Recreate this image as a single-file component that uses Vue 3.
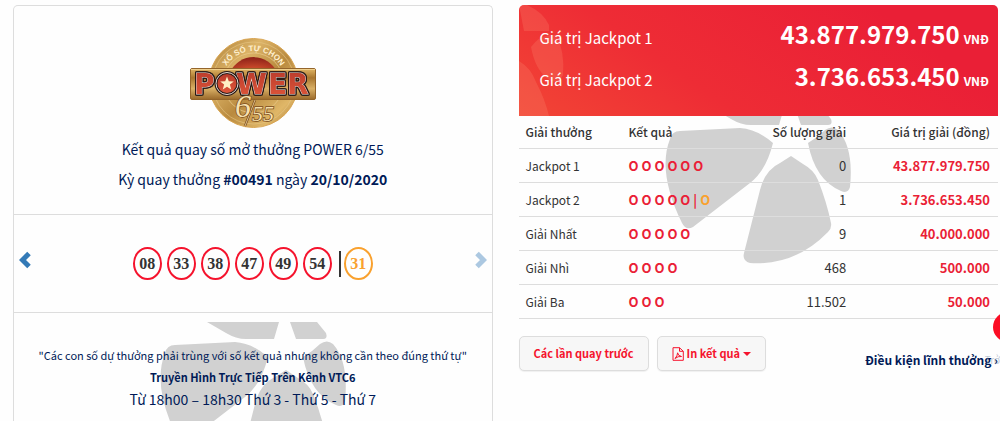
<template>
  <main class="page">
    <!-- Kỳ quay thưởng -->
    <section class="draw-card">
      <header class="draw-head">
        <svg class="logo" viewBox="0 0 128 92" role="img" aria-label="Power 6/55">
          <defs>
            <linearGradient id="gold" x1="0" y1="0" x2="1" y2="1">
              <stop offset="0" stop-color="#a87a33" />
              <stop offset="0.3" stop-color="#dcb367" />
              <stop offset="0.55" stop-color="#b98a3f" />
              <stop offset="0.8" stop-color="#e0b768" />
              <stop offset="1" stop-color="#a0702c" />
            </linearGradient>
            <linearGradient id="plate" x1="0" y1="0" x2="0" y2="1">
              <stop offset="0" stop-color="#e3b866" />
              <stop offset="0.3" stop-color="#a9762f" />
              <stop offset="0.65" stop-color="#d9b066" />
              <stop offset="1" stop-color="#9a692a" />
            </linearGradient>
            <linearGradient id="letter" x1="0" y1="0" x2="0" y2="1">
              <stop offset="0" stop-color="#b7392a" />
              <stop offset="1" stop-color="#e2593c" />
            </linearGradient>
            <radialGradient id="glow" cx="0.5" cy="0.9" r="0.8">
              <stop offset="0" stop-color="#d8542f" />
              <stop offset="1" stop-color="#93251a" />
            </radialGradient>
            <path id="arc" d="M32.500 46 A32 32 0 0 1 96.500 46" />
          </defs>
          <circle cx="64.5" cy="46" r="44.5" fill="url(#gold)" stroke="#d9a552" />
          <circle cx="64.5" cy="46" r="41" fill="none" stroke="#e7c685" stroke-width="0.6" />
          <circle cx="64.5" cy="46" r="30" fill="none" stroke="#e7c685" stroke-width="0.8" />
          <path d="M41 35 A26 26 0 0 1 88 35 Z" fill="url(#glow)" />
          <text class="logo-arc"><textPath href="#arc" startOffset="50%" text-anchor="middle">XỔ SỐ TỰ CHỌN</textPath></text>
          <rect x="1.500" y="31.500" width="125" height="31" rx="1.500" fill="url(#plate)" stroke="#94652b" />
          <path d="M2 32.500 H126" stroke="#f0d08c" />
          <g class="logo-word">
            <text x="5" y="57">P</text>
            <text x="47" y="57">W</text>
            <text x="79" y="57">E</text>
            <text x="98" y="57">R</text>
          </g>
          <circle cx="38" cy="46.5" r="11" fill="url(#letter)" stroke="#2a1a17" stroke-width="3" />
          <circle cx="38" cy="46.5" r="11" fill="none" stroke="#e8ddd6" stroke-width="1" />
          <path d="M38 39.500 L39.800 44.200 L44.800 44.500 L40.900 47.600 L42.200 52.500 L38 49.700 L33.800 52.500 L35.100 47.600 L31.200 44.500 L36.200 44.200 Z" fill="#fff0c4" />
          <path d="M66 63 L56 89" stroke="#7a4a1c" stroke-width="2.200" />
          <path d="M66 63 L56 89" stroke="#f3dca6" stroke-width="0.8" />
          <text class="logo-six" x="46" y="80">6</text>
          <text class="logo-fives" x="63" y="84">55</text>
        </svg>
        <p class="draw-title">Kết quả quay số mở thưởng POWER 6/55</p>
        <p class="draw-title">Kỳ quay thưởng <b>#00491</b> ngày <b>20/10/2020</b></p>
      </header>

      <div class="draw-numbers">
        <button class="nav-btn" type="button" aria-label="Kỳ trước">
          <svg viewBox="0 0 12 18"><path d="M10 2.500 L3.500 9 L10 15.500" /></svg>
        </button>
        <div class="balls">
          <span v-for="n in numbers" :key="n" class="ball">{{ n }}</span>
          <span class="ball-divider"></span>
          <span class="ball ball-bonus">31</span>
        </div>
        <button class="nav-btn" type="button" aria-label="Kỳ sau" disabled>
          <svg viewBox="0 0 12 18"><path d="M2 2.500 L8.500 9 L2 15.500" /></svg>
        </button>
      </div>

      <div class="draw-note">
        <svg class="watermark" viewBox="0 0 188 158" aria-hidden="true">
          <path v-for="d in petals" :key="d" :d="d" />
        </svg>
        <p class="note-small">"Các con số dự thưởng phải trùng với số kết quả nhưng không cần theo đúng thứ tự"</p>
        <p class="note-small note-bold">Truyền Hình Trực Tiếp Trên Kênh VTC6</p>
        <p class="note-time">Từ 18h00 – 18h30 Thứ 3 - Thứ 5 - Thứ 7</p>
      </div>
    </section>

    <!-- Bảng giải thưởng -->
    <section class="prizes">
      <div class="jackpots">
        <svg class="jackpot-bg" viewBox="0 0 60 111" aria-hidden="true">
          <path d="M0 0 H8 Q24 7 30 20 V26 H5 Z" />
          <path d="M12 42 Q20 31 31 30 H37 Q46 46 44 70 Q38 82 28 73 Q16 64 12 42 Z" />
          <path d="M0 56 Q12 63 17 77 Q26 94 30 111 H0 Z" />
        </svg>
        <div v-for="j in jackpots" :key="j.label" class="jackpot">
          <span class="jackpot-label">{{ j.label }}</span>
          <span class="jackpot-value">{{ j.value }}<small>VNĐ</small></span>
        </div>
      </div>

      <div class="table-wrap">
        <svg class="watermark" viewBox="0 0 188 158" aria-hidden="true">
          <path v-for="d in petals" :key="d" :d="d" />
        </svg>
        <table>
          <thead>
            <tr>
              <th class="col-name">Giải thưởng</th>
              <th class="col-match">Kết quả</th>
              <th class="col-count">Số lượng giải</th>
              <th class="col-value">Giá trị giải (đồng)</th>
            </tr>
          </thead>
          <tbody>
            <tr v-for="row in rows" :key="row.name">
              <td>{{ row.name }}</td>
              <td class="match">{{ row.match }}<template v-if="row.bonus"><span class="bar">|</span><span class="bonus">O</span></template></td>
              <td class="col-count count">{{ row.count }}</td>
              <td class="col-value value">{{ row.value }}</td>
            </tr>
          </tbody>
        </table>
      </div>

      <div class="actions">
        <button class="btn" type="button">Các lần quay trước</button>
        <button class="btn" type="button">
          <svg class="icon-pdf" viewBox="0 0 12 14">
            <path d="M1 0.700 H7.500 L11.300 4.300 V13.300 H1 Z M7.500 0.700 V4.300 H11.300" />
            <path d="M3 11.500 Q5.500 9 5.600 5.800 Q6 9 9.500 9.500 Q6 9 3 11.500" />
          </svg>
          In kết quả
          <i class="caret"></i>
        </button>
        <a class="terms" href="#">Điều kiện lĩnh thưởng ›</a>
      </div>
    </section>

    <!-- Nút nổi bên phải -->
    <button class="float-btn" type="button" aria-label="Hỗ trợ"></button>
    <span class="float-label">Trở</span>
  </main>
</template>

<script setup>
const numbers = ['08', '33', '38', '47', '49', '54']

const jackpots = [
  { label: 'Giá trị Jackpot 1', value: '43.877.979.750' },
  { label: 'Giá trị Jackpot 2', value: '3.736.653.450' },
]

const rows = [
  { name: 'Jackpot 1', match: 'O O O O O O', count: '0', value: '43.877.979.750' },
  { name: 'Jackpot 2', match: 'O O O O O', bonus: true, count: '1', value: '3.736.653.450' },
  { name: 'Giải Nhất', match: 'O O O O O', count: '9', value: '40.000.000' },
  { name: 'Giải Nhì', match: 'O O O O', count: '468', value: '500.000' },
  { name: 'Giải Ba', match: 'O O O', count: '11.502', value: '50.000' },
]

// Năm cánh của hình nền mờ
const petals = [
  'M47 0 H119 L114 17 H86 Q76 17 66 11 Z',
  'M130 0 H157 Q161 5 166 11 Q168 17 163 17 H136 Z',
  'M15 23 L75 20 Q92 21 108 35 Q101 63 85 75 L28 119 Q21 123 17 115 Q-8 64 5 31 Q7 23 15 23 Z',
  'M143 35 Q152 30 160 22 Q167 17 173 22 Q189 40 185 79 Q183 86 176 83 Q150 72 143 35 Z',
  'M126 48 L138 56 Q149 62 153 72 Q162 95 166 115 Q167 120 163 124 Q130 158 85 155 Q77 153 79 145 L95 82 Q100 62 115 55 Z',
]
</script>

<style>
body {
  margin: 0;
  background: #fefefe;
}
</style>

<style scoped>
.page {
  position: relative;
  display: grid;
  grid-template-columns: 1fr 1fr;
  gap: 26px;
  box-sizing: border-box;
  height: 100vh;
  padding: 5px 2px 0 13px;
  overflow: hidden;
  font-family: 'Noto Sans CJK SC', 'Noto Sans', sans-serif;
  font-size: 12px;
  color: #333;
}

p {
  margin: 0;
}

button {
  font-family: inherit;
  cursor: pointer;
}

/* ============ Thẻ bên trái ============ */
.draw-card {
  display: flex;
  flex-direction: column;
  border: 1px solid #ddd;
  border-bottom: none;
  border-radius: 5px 5px 0 0;
  color: #001a57;
  text-align: center;
}

.draw-head {
  display: flex;
  flex-direction: column;
  align-items: center;
  padding: 31px 0 20px;
  border-bottom: 1px solid #ddd;
}

.logo {
  width: 128px;
  height: 92px;
  margin-bottom: 5px;
}

.logo-arc {
  font: bold 8px 'Liberation Sans', sans-serif;
  fill: #fff0cf;
}

.logo-word {
  font: bold 28px 'DejaVu Sans', sans-serif;
  fill: url(#letter);
  stroke: #e8ddd6;
  stroke-width: 1px;
  paint-order: stroke;
  filter: drop-shadow(1px 0 0 #2a1a17) drop-shadow(-1px 0 0 #2a1a17) drop-shadow(0 1px 0 #2a1a17) drop-shadow(0 -1px 0 #2a1a17);
}

.logo-six,
.logo-fives {
  font: italic 32px 'Liberation Serif', serif;
  fill: #f6e0ae;
  stroke: #7a4a1c;
  stroke-width: 1.5px;
  paint-order: stroke;
}

.logo-fives {
  font-size: 22px;
}

.draw-title {
  font-size: 14px;
  line-height: 30px;
}

.draw-numbers {
  display: flex;
  align-items: center;
  justify-content: space-between;
  height: 97px;
  padding: 0 5px;
  border-bottom: 1px solid #ddd;
}

.nav-btn {
  width: 12px;
  height: 18px;
  margin-bottom: 8px;
  padding: 0;
  border: none;
  background: none;
}

.nav-btn svg {
  display: block;
}

.nav-btn path {
  fill: none;
  stroke: #337ab7;
  stroke-width: 5;
}

.nav-btn:disabled {
  opacity: 0.4;
}

.balls {
  display: flex;
  align-items: center;
  gap: 5px;
}

.ball {
  box-sizing: border-box;
  width: 29px;
  height: 33px;
  border: 2px solid #f5132d;
  border-radius: 50%;
  font: bold 16px/29px 'Liberation Serif', serif;
  color: #333;
}

.ball-bonus {
  border-color: #f9a12e;
  color: #f9a12e;
}

.ball-divider {
  width: 2px;
  height: 26px;
  margin: 0 -2px 0 2px;
  background: #333;
}

.draw-note {
  position: relative;
  flex: 1;
  padding-top: 31px;
  overflow: hidden;
}

.draw-note p {
  position: relative;
}

.watermark {
  position: absolute;
  width: 188px;
  height: 158px;
  fill: #d1d1d1;
}

.draw-note .watermark {
  top: 9px;
  left: 146px;
}

.note-small {
  font-size: 11px;
  line-height: 22px;
}

.note-bold {
  font-weight: bold;
}

.note-time {
  font-size: 14px;
  line-height: 22px;
}

/* ============ Jackpot ============ */
.jackpots {
  position: relative;
  box-sizing: border-box;
  height: 111px;
  padding: 8px 9px 0 21px;
  border-radius: 5px 5px 0 0;
  overflow: hidden;
  background: linear-gradient(35deg, #f24535 0%, #ee2c35 35%, #ea1f36 80%);
  color: #fff;
}

.jackpot-bg {
  position: absolute;
  top: 0;
  left: 0;
  width: 60px;
  height: 111px;
  fill: rgba(255, 160, 130, 0.2);
}

.jackpot {
  position: relative;
  display: flex;
  align-items: baseline;
  justify-content: space-between;
  height: 42px;
  line-height: 42px;
}

.jackpot-label {
  font-size: 15px;
}

.jackpot-value {
  font-size: 24px;
  font-weight: bold;
}

.jackpot-value small {
  margin-left: 4px;
  font-size: 12px;
  line-height: 12px;
}

/* ============ Bảng ============ */
.table-wrap {
  position: relative;
  overflow: hidden;
}

.table-wrap .watermark {
  top: -8px;
  left: 146px;
}

table {
  position: relative;
  width: 100%;
  border-collapse: separate;
  border-spacing: 0;
  table-layout: fixed;
}

th,
td {
  box-sizing: border-box;
  height: 34px;
  padding: 0 8px 0 7px;
  border-bottom: 1px solid #ddd;
  font-weight: normal;
  line-height: 32px;
  text-align: left;
  white-space: nowrap;
}

th {
  height: 33px;
  font-weight: 500;
}

.col-name {
  width: 103px;
}

.col-match {
  width: 25%;
}

.col-count,
.col-value {
  text-align: right;
}

th.col-value {
  width: 30%;
}

.count,
.match,
.value {
  font-size: 13px;
}

.match,
.value {
  color: #ea1f36;
  font-weight: bold;
}

.bar {
  margin: 0 3px;
}

.bonus {
  color: #f9a12e;
}

/* ============ Nút ============ */
.actions {
  display: flex;
  align-items: flex-start;
  gap: 8px;
  margin-top: 17px;
}

.btn {
  display: flex;
  align-items: center;
  gap: 3px;
  padding: 0 14px;
  border: 1px solid #ddd;
  border-radius: 5px;
  background: #f7f7f7;
  box-shadow: 0 1px 1px rgba(0, 0, 0, 0.06);
  color: #f5132d;
  font-size: 11px;
  font-weight: bold;
  line-height: 33px;
}

.icon-pdf {
  width: 12px;
  height: 14px;
  fill: none;
  stroke: #f5132d;
}

.caret {
  border: 4px solid transparent;
  border-top-color: #f5132d;
  border-bottom: none;
}

.terms {
  margin: 13px 0 0 auto;
  color: #001a57;
  font-weight: bold;
  line-height: 22px;
  text-decoration: none;
}

/* ============ Nút nổi ============ */
.float-btn {
  position: absolute;
  top: 312px;
  right: -23px;
  width: 30px;
  height: 30px;
  border: none;
  border-radius: 50%;
  background: #fb0d24;
}

.float-label {
  position: absolute;
  top: 350px;
  right: 0;
  color: rgba(150, 165, 185, 0.6);
  font-size: 10px;
  line-height: 20px;
}
</style>
